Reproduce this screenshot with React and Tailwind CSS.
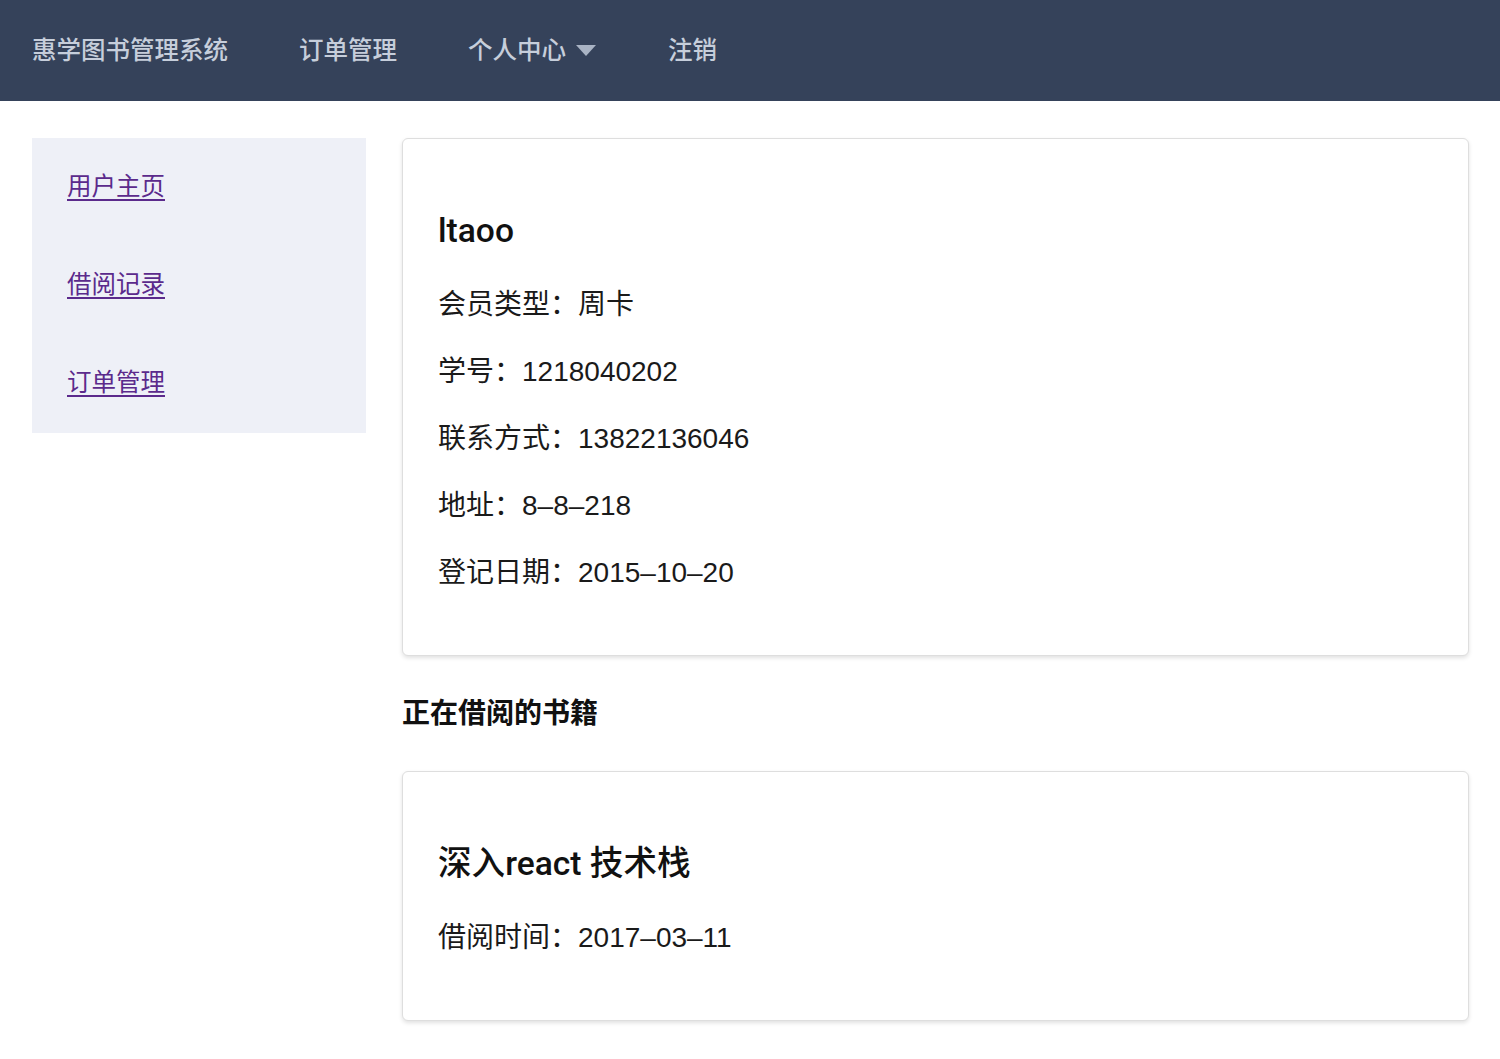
const FONT = { fontFamily: '"Liberation Sans", "Noto Sans CJK SC", sans-serif' };
const TITLE_FONT = { fontFamily: 'Roboto, "Noto Sans CJK SC", sans-serif' };

const NAV_ITEMS = ['订单管理', '个人中心', '注销'];

const SIDE_LINKS = ['用户主页', '借阅记录', '订单管理'];

const PROFILE = [
  ['会员类型', '周卡'],
  ['学号', '1218040202'],
  ['联系方式', '13822136046'],
  ['地址', '8–8–218'],
  ['登记日期', '2015–10–20'],
];

function Caret() {
  return (
    <svg width="20" height="11" viewBox="0 0 20 11" className="ml-[10px] mt-[-3px]">
      <path d="M0 0 L20 0 L10 11 Z" fill="#a9b3c4" />
    </svg>
  );
}

function Card({ title, rows }) {
  return (
    <div className="rounded-[6px] border border-[#dedede] bg-white px-[35px] pt-[72px] pb-[49px] shadow-[0_2px_4px_rgba(0,0,0,0.12)]">
      <h2 className="h-[40px] text-[33.6px] leading-[40px] font-medium text-[#111]" style={TITLE_FONT}>
        {title}
      </h2>
      <div className="mt-[20px]">
        {rows.map(([k, v]) => (
          <div key={k} className="flex h-[67px] items-center text-[28px] text-[#1a1a1a]">
            {k}：{v}
          </div>
        ))}
      </div>
    </div>
  );
}

export default function App() {
  return (
    <div className="min-h-screen bg-white" style={FONT}>
      {/* top nav */}
      <nav className="flex h-[101px] items-center bg-[#35425a] pt-[2px] pl-[32px] text-[24.5px] font-medium text-[#c6cedb]">
        <span>惠学图书管理系统</span>
        <span className="ml-[71px]">{NAV_ITEMS[0]}</span>
        <span className="ml-[71px] flex items-center">
          {NAV_ITEMS[1]}
          <Caret />
        </span>
        <span className="ml-[72px]">{NAV_ITEMS[2]}</span>
      </nav>

      <div className="flex gap-[36px] pt-[37px] pl-[32px] pr-[31px] pb-[40px]">
        {/* sidebar */}
        <aside className="h-[295px] w-[334px] shrink-0 bg-[#eef0f7]">
          {SIDE_LINKS.map((l) => (
            <div key={l} className="flex h-[98.3px] items-center pl-[35px]">
              <a href="#" className="text-[24.5px] text-[#5b2a8c] underline underline-offset-[4px]">
                {l}
              </a>
            </div>
          ))}
        </aside>

        {/* main */}
        <main className="flex-1">
          <Card title="ltaoo" rows={PROFILE} />
          <h3 className="mt-[38px] mb-[37px] h-[40px] text-[28px] leading-[40px] font-bold text-[#111]">
            正在借阅的书籍
          </h3>
          <Card title="深入react 技术栈" rows={[['借阅时间', '2017–03–11']]} />
        </main>
      </div>
    </div>
  );
}
